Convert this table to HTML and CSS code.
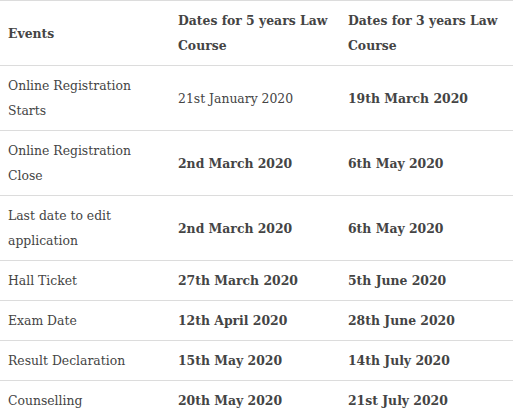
FILE: index.html
```html
<!DOCTYPE html>
<html lang="en">
<head>
<meta charset="utf-8">
<title>Law Course Dates</title>
<link rel="stylesheet" href="styles.css">
</head>
<body>
<table class="dates">
  <colgroup>
    <col class="c1"><col class="c2"><col class="c3">
  </colgroup>
  <thead>
    <tr>
      <th>Events</th>
      <th>Dates for 5 years Law<br>Course</th>
      <th>Dates for 3 years Law<br>Course</th>
    </tr>
  </thead>
  <tbody>
    <tr><td>Online Registration<br>Starts</td><td>21st January 2020</td><td class="b">19th March 2020</td></tr>
    <tr><td>Online Registration<br>Close</td><td class="b">2nd March 2020</td><td class="b">6th May 2020</td></tr>
    <tr><td>Last date to edit<br>application</td><td class="b">2nd March 2020</td><td class="b">6th May 2020</td></tr>
    <tr><td>Hall Ticket</td><td class="b">27th March 2020</td><td class="b">5th June 2020</td></tr>
    <tr><td>Exam Date</td><td class="b">12th April 2020</td><td class="b">28th June 2020</td></tr>
    <tr><td>Result Declaration</td><td class="b">15th May 2020</td><td class="b">14th July 2020</td></tr>
    <tr><td>Counselling</td><td class="b">20th May 2020</td><td class="b">21st July 2020</td></tr>
  </tbody>
</table>
</body>
</html>
```
FILE: styles.css
```css
html, body {
  margin: 0;
  padding: 0;
  background: #fff;
}
body {
  font-family: "DejaVu Serif", Georgia, serif;
  font-size: 12.4px;
  color: #444;
}
.dates {
  border-collapse: collapse;
  width: 513px;
  table-layout: fixed;
}
.c1 { width: 170px; }
.c2 { width: 170px; }
.dates th,
.dates td {
  border-top: 1px solid #dcdcdc;
  border-bottom: 1px solid #dcdcdc;
  padding: 7px 4px 7px 8px;
  line-height: 25px;
  text-align: left;
  vertical-align: middle;
  white-space: nowrap;
}
.dates th {
  font-weight: bold;
}
.dates td.b {
  font-weight: bold;
}
```
